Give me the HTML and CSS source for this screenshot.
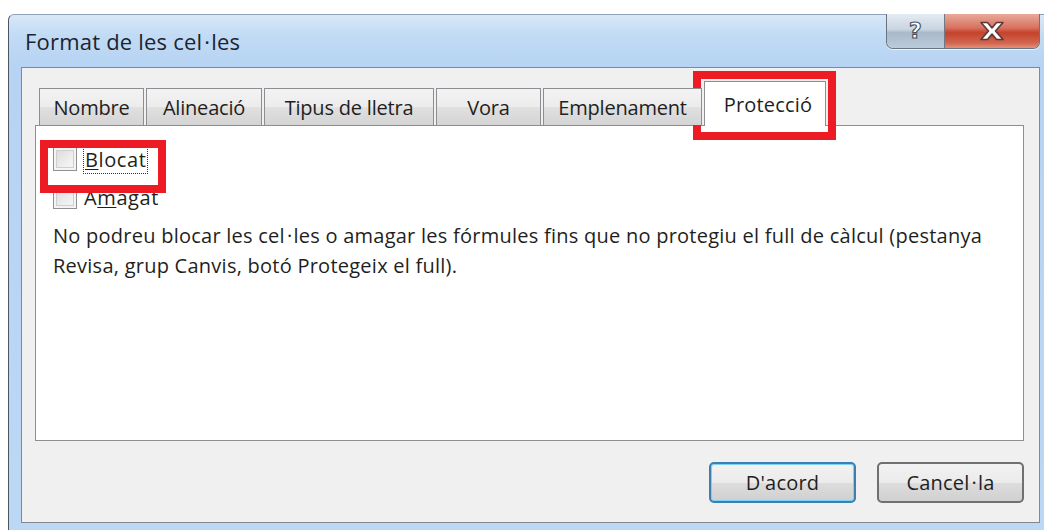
FILE: index.html
```html
<!DOCTYPE html>
<html lang="ca">
<head>
<meta charset="utf-8">
<title>Format de les cel·les</title>
<link rel="stylesheet" href="styles.css">
</head>
<body>
<div class="screen">
  <div class="window">
    <div class="titlebar">
      <span class="title">Format de les cel<span class="punt">·</span>les</span>
      <div class="caption-buttons">
        <div class="cap-btn help"><span>?</span></div>
        <div class="cap-btn close">
          <svg width="34" height="22" viewBox="0 0 34 22">
            <path d="M6 2.5 L12.5 2.5 L17 8 L21.5 2.5 L28 2.5 L20.5 11 L28 19.5 L21.5 19.5 L17 14 L12.5 19.5 L6 19.5 L13.5 11 Z" fill="#fff" stroke="#5a3a38" stroke-width="1.6" stroke-linejoin="round"/>
          </svg>
        </div>
      </div>
    </div>
    <div class="client">
      <div class="tabs">
        <div class="tab t-nombre">Nombre</div>
        <div class="tab t-alin">Alineació</div>
        <div class="tab t-tipus">Tipus de lletra</div>
        <div class="tab t-vora">Vora</div>
        <div class="tab t-empl">Emplenament</div>
        <div class="tab active">Protecció</div>
      </div>
      <div class="panel">
        <label class="check"><span class="box"></span><span class="lbl focus"><u>B</u>locat</span></label>
        <label class="check"><span class="box"></span><span class="lbl">A<u>m</u>agat</span></label>
        <p class="note">No podreu blocar les cel<span class="punt">·</span>les o amagar les fórmules fins que no protegiu el full de càlcul (pestanya<br>Revisa, grup Canvis, botó Protegeix el full).</p>
      </div>
      <div class="actions">
        <button class="btn default">D'acord</button>
        <button class="btn">Cancel<span class="punt">·</span>la</button>
      </div>
    </div>
  </div>
  <div class="mark mark-tab"></div>
  <div class="mark mark-check"></div>
</div>
</body>
</html>
```

FILE: styles.css
```css
html, body {
  margin: 0;
  padding: 0;
  background: #fff;
  overflow: hidden;
}

.screen {
  position: relative;
  width: 1044px;
  height: 530px;
  padding: 14px 0 0 8px;
  box-sizing: border-box;
  font-family: "Open Sans", "Noto Sans", sans-serif;
  color: #1f1f22;
}

/* Catalan middle dot (l·l) gets a little room on both sides */
.punt {
  margin: 0 1px 0 2px;
}

/* outer window frame */
.window {
  width: 1050px;
  height: 530px;
  box-sizing: border-box;
  border-left: 1px solid #4d5660;
  border-top: 1px solid #8fa3b8;
  border-top-left-radius: 6px;
  background: linear-gradient(180deg, #d9e8f8 0px, #c2dbf5 20px, #b6d3f3 52px, #bcd8f5 100%);
  display: flex;
  flex-direction: column;
}

.titlebar {
  height: 52px;
  display: flex;
  align-items: flex-start;
  flex-shrink: 0;
}

.title {
  margin: 11px 0 0 16px;
  font-size: 22px;
  letter-spacing: 0.2px;
  color: #1c2430;
}

.caption-buttons {
  margin-left: auto;
  margin-right: 18px;
  margin-top: -1px;
  display: flex;
  height: 34px;
  border: 1px solid #6a7480;
  border-top: none;
  border-radius: 0 0 7px 7px;
  overflow: hidden;
  box-shadow: 0 1px 0 rgba(255,255,255,0.7);
}

.cap-btn {
  height: 34px;
  display: flex;
  align-items: center;
  justify-content: center;
}

.help {
  width: 57px;
  border-right: 1px solid #6f7a86;
  background: linear-gradient(180deg, #e4ebf2 0%, #c9d5e2 45%, #a9b9ca 55%, #bccbda 100%);
}

.help span {
  font-family: "DejaVu Sans", sans-serif;
  font-weight: bold;
  font-size: 22px;
  color: #fff;
  -webkit-text-stroke: 1.2px #4a5560;
  line-height: 1;
}

.close {
  width: 94px;
  background: linear-gradient(180deg, #e9a99b 0%, #d9735f 40%, #c4432c 55%, #d1654e 85%, #e2907a 100%);
}

/* client area of the dialog */
.client {
  margin-left: 12px;
  width: 1019px;
  height: 456px;
  box-sizing: border-box;
  border: 1px solid #828790;
  background: #f0f0f0;
  padding: 14px 15px 0 13px;
  display: flex;
  flex-direction: column;
}

.tabs {
  display: flex;
  align-items: flex-end;
  height: 44px;
  padding-left: 4px;
  position: relative;
  z-index: 1;
  margin-bottom: -1px;
}

.tab {
  height: 37px;
  box-sizing: border-box;
  border: 1px solid #8c8e94;
  border-bottom: none;
  margin-right: 2px;
  background: linear-gradient(180deg, #f3f3f3 0%, #ececec 50%, #e0e0e0 51%, #d4d4d4 100%);
  font-size: 20px;
  letter-spacing: -0.2px;
  display: flex;
  align-items: center;
  justify-content: center;
  padding-top: 1px;
  margin-bottom: 1px;
}

.t-nombre { width: 105px; }
.t-alin { width: 116px; }
.t-tipus { width: 170px; }
.t-vora { width: 105px; }
.t-empl { width: 159px; }

.tab.active {
  height: 45px;
  width: 122px;
  margin-bottom: 0;
  margin-left: 0;
  background: #fff;
  padding-top: 0;
  padding-bottom: 0;
  padding-left: 6px;
  letter-spacing: 0.2px;
}

.panel {
  height: 316px;
  box-sizing: border-box;
  border: 1px solid #8c8e94;
  background: #fff;
  padding: 19px 17px 0 17px;
}

.check {
  display: flex;
  align-items: center;
  height: 28px;
  font-size: 20px;
  letter-spacing: 0.6px;
  margin-bottom: 13px;
}

.check + .check {
  margin-top: -3px;
  margin-bottom: 0;
}

.box {
  width: 24px;
  height: 24px;
  box-sizing: border-box;
  border: 1px solid #8f8f8f;
  background: linear-gradient(135deg, #d8d8d8 0%, #eeeeee 60%, #f8f8f8 100%);
  box-shadow: inset 0 0 0 2px #f4f4f4, inset 0 0 0 3px #cfcfcf;
  margin-right: 7px;
  flex-shrink: 0;
}

.lbl u { text-decoration-thickness: 1px; text-underline-offset: 2px; }

.focus {
  outline: 1px dotted #333;
  outline-offset: 0;
  padding: 0 1px;
}

.note {
  margin: 10px 0 0 0;
  font-size: 20px;
  letter-spacing: 0.25px;
  line-height: 30px;
  white-space: nowrap;
}

.actions {
  display: flex;
  justify-content: flex-end;
  gap: 21px;
  margin-top: 21px;
}

.btn {
  width: 147px;
  height: 41px;
  box-sizing: border-box;
  border: 2px solid #707070;
  border-radius: 5px;
  background: linear-gradient(180deg, #f2f2f2 0%, #ebebeb 50%, #dddddd 51%, #d0d0d0 100%);
  font-family: "Open Sans", "Noto Sans", sans-serif;
  font-size: 20px;
  letter-spacing: 0.2px;
  color: #1f1f22;
  padding: 0;
}

.btn.default {
  border-color: #3c7fb1;
  box-shadow: inset 0 0 0 1px #7fd0f3;
}

/* red highlight annotations */
.mark {
  position: absolute;
  border: 8px solid #ed1c24;
  box-sizing: border-box;
  pointer-events: none;
}

.mark-tab {
  left: 693px;
  top: 71px;
  width: 143px;
  height: 69px;
}

.mark-check {
  left: 40px;
  top: 140px;
  width: 126px;
  height: 53px;
}
```
